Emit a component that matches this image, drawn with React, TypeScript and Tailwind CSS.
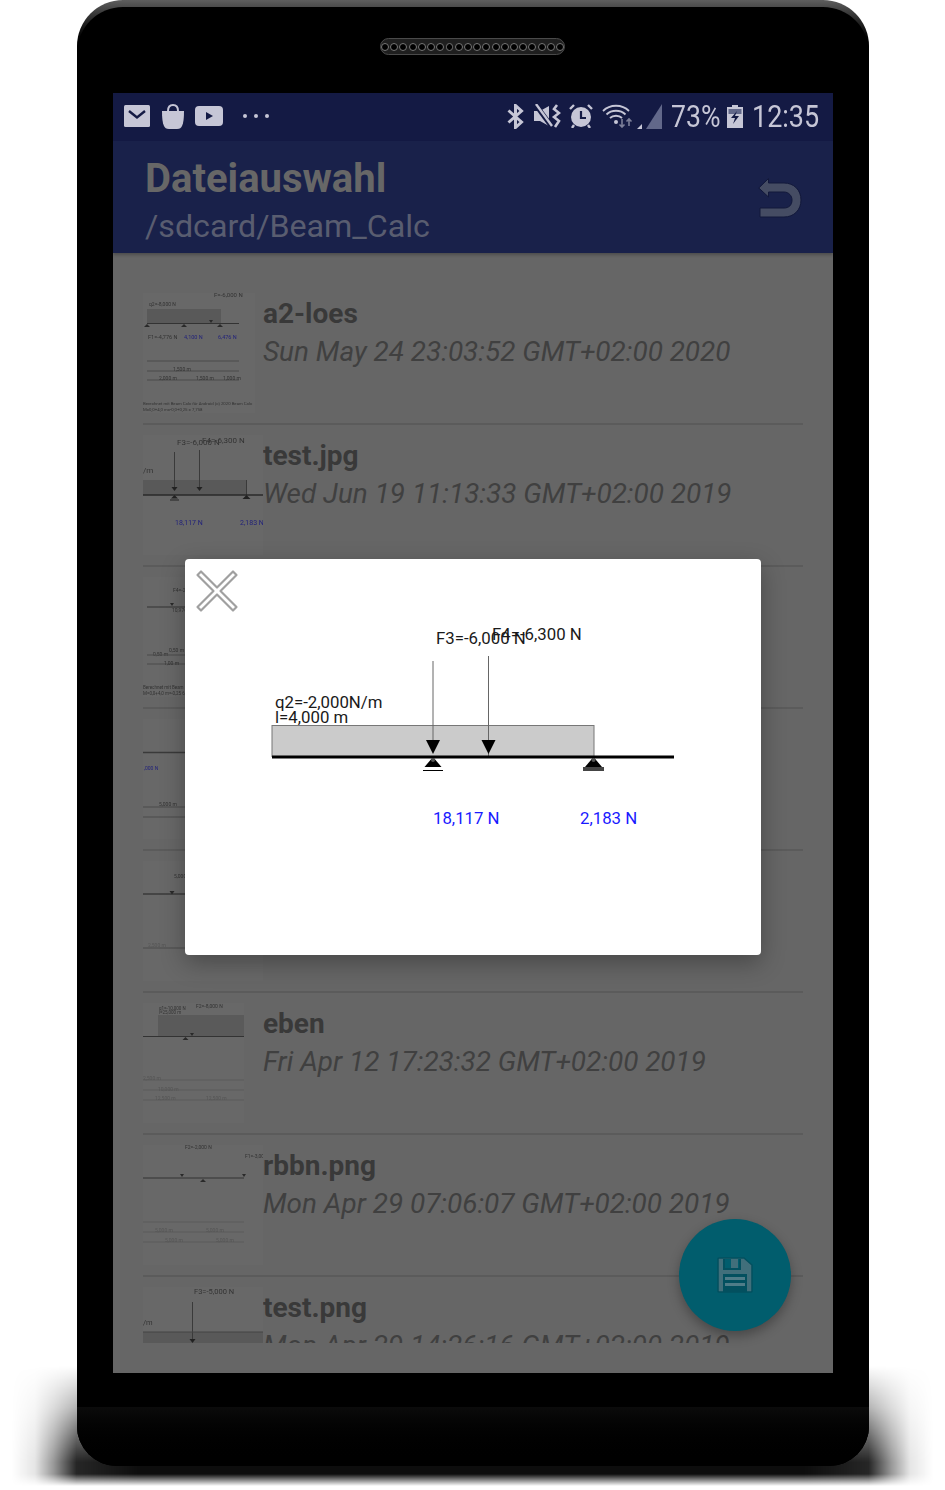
import type { ReactNode } from 'react';

const rows: { y: number; name?: string; date?: string; width?: number }[] = [
    { y: 293, name: 'a2-loes', date: 'Sun May 24 23:03:52 GMT+02:00 2020', width: 112 },
    { y: 435, name: 'test.jpg', date: 'Wed Jun 19 11:13:33 GMT+02:00 2019' },
    { y: 577 },
    { y: 719 },
    { y: 861 },
    { y: 1003, name: 'eben', date: 'Fri Apr 12 17:23:32 GMT+02:00 2019', width: 101 },
    { y: 1145, name: 'rbbn.png', date: 'Mon Apr 29 07:06:07 GMT+02:00 2019' },
    { y: 1287, name: 'test.png', date: 'Mon Apr 29 14:26:16 GMT+02:00 2019' },
];

function Line({ x1, x2, y, w = 1, c = '#4b4b4b' }: { x1: number; x2: number; y: number; w?: number; c?: string }) {
    return <line x1={x1} x2={x2} y1={y} y2={y} stroke={c} strokeWidth={w} />;
}

function Label({ x, y, s = 6, c = '#333', children }: { x: number; y: number; s?: number; c?: string; children: ReactNode }) {
    return (
        <text x={x} y={y} fontSize={s} fill={c}>
            {children}
        </text>
    );
}

function Up({ x, y, r = 3, c = '#2a2a2a' }: { x: number; y: number; r?: number; c?: string }) {
    return <path d={`M${x - r} ${y + r}L${x} ${y}L${x + r} ${y + r}Z`} fill={c} />;
}

function Down({ x, y, r = 3, c = '#2a2a2a' }: { x: number; y: number; r?: number; c?: string }) {
    return <path d={`M${x - r} ${y}L${x + r} ${y}L${x} ${y + r + 1}Z`} fill={c} />;
}

function thumbContent(y: number) {
    if (y === 293)
        return (
            <>
                <Label x={214} y={297}>F=-6,000 N</Label>
                <Label x={149} y={306} s={5}>q2=-8,000 N</Label>
                <rect x={147} y={309} width={74} height={14} fill="#595959" />
                <Line x1={147} x2={239} y={323.5} c="#333" />
                <Up x={147} y={324} />
                <Up x={184} y={324} />
                <Up x={220} y={324} />
                <Down x={211} y={320} r={2} />
                <Label x={148} y={339} s={5.5}>F1=-4,776 N</Label>
                <Label x={184} y={339} s={5.5} c="#23237a">4,100 N</Label>
                <Label x={218} y={339} s={5.5} c="#23237a">6,476 N</Label>
                <Line x1={147} x2={239} y={361} />
                <Line x1={147} x2={239} y={371} />
                <Line x1={147} x2={239} y={380} />
                <Label x={173} y={371} s={5}>1,500 m</Label>
                <Label x={159} y={380} s={5}>2,000 m</Label>
                <Label x={196} y={380} s={5}>1,500 m</Label>
                <Label x={223} y={380} s={5}>1,000 m</Label>
                <Label x={143} y={405} s={4.3}>Berechnet mit Beam Calc für Android (c) 2020 Beam Calc</Label>
                <Label x={143} y={411} s={4.3}>M=0,0+4,0 m=-0,0+0,25 = 7,758</Label>
            </>
        );
    if (y === 435)
        return (
            <>
                <Label x={177} y={445} s={8}>F3=-6,000 N</Label>
                <Label x={202} y={443} s={8}>F4=-6,300 N</Label>
                <Label x={143} y={473} s={8}>/m</Label>
                <rect x={143} y={480} width={104} height={15} fill="#595959" />
                <line x1={174.5} x2={174.5} y1={452} y2={488} stroke="#3a3a3a" />
                <line x1={199.5} x2={199.5} y1={450} y2={488} stroke="#3a3a3a" />
                <line x1={246.5} x2={246.5} y1={480} y2={495} stroke="#3a3a3a" />
                <Down x={174.5} y={487} r={3} c="#222" />
                <Down x={199.5} y={487} r={3} c="#222" />
                <Line x1={143} x2={263} y={495} w={1.5} c="#2a2a2a" />
                <Up x={174.5} y={495} r={3.5} c="#222" />
                <Line x1={170} x2={179} y={500} c="#222" />
                <Up x={246.5} y={495} r={4} c="#222" />
                <Label x={175} y={525} s={7} c="#22227a">18,117 N</Label>
                <Label x={240} y={525} s={7} c="#22227a">2,183 N</Label>
            </>
        );
    if (y === 577)
        return (
            <>
                <Label x={173} y={592} s={5}>F4=-2,000</Label>
                <Line x1={147} x2={190} y={607} c="#333" />
                <Down x={172} y={603} r={2} />
                <Line x1={171} x2={171} y={607} />
                <Label x={172} y={612} s={5}>10,976 N</Label>
                <Label x={169} y={652} s={5}>0,50 m</Label>
                <Label x={153} y={656} s={5}>0,50 m</Label>
                <Line x1={147} x2={190} y={655} />
                <Line x1={147} x2={190} y={664} />
                <Label x={164} y={665} s={5}>1,00 m</Label>
                <Label x={143} y={689} s={4.5}>Berechnet mit Beam Calc</Label>
                <Label x={143} y={695} s={4.5}>M=0,0+4,0 m=-0,25 6,58</Label>
            </>
        );
    if (y === 719)
        return (
            <>
                <Line x1={143} x2={190} y={752.5} w={1.5} c="#3a3a3a" />
                <Label x={144} y={770} s={5} c="#23237a">,000 N</Label>
                <Line x1={143} x2={190} y={807} />
                <Line x1={143} x2={190} y={817} />
                <Label x={159} y={806} s={5}>5,000 m</Label>
            </>
        );
    if (y === 861)
        return (
            <>
                <Label x={174} y={878} s={5}>5,000 N</Label>
                <Line x1={143} x2={190} y={894} w={1.5} c="#3a3a3a" />
                <Down x={172} y={891} r={2.5} />
                <Line x1={143} x2={190} y={948} />
                <Label x={148} y={947} s={5} c="#555">2,500 m</Label>
            </>
        );
    if (y === 1003)
        return (
            <>
                <Label x={196} y={1008} s={5}>F2=-8,000 N</Label>
                <Label x={159} y={1010} s={4.5}>q1=-10,000 N</Label>
                <Label x={159} y={1014} s={4.5}>l=25,000 m</Label>
                <rect x={158} y={1015} width={86} height={21} fill="#5a5a5a" />
                <Down x={192} y={1033} r={2} />
                <Line x1={143} x2={244} y={1036.5} c="#333" />
                <Up x={185.5} y={1037} r={3} />
                <Line x1={143} x2={244} y={1080} c="#5a5a5a" />
                <Line x1={143} x2={244} y={1090} c="#5a5a5a" />
                <Line x1={143} x2={244} y={1100} c="#5a5a5a" />
                <Label x={143} y={1080} s={5} c="#555">2,500 m</Label>
                <Label x={158} y={1091} s={5} c="#555">10,000 m</Label>
                <Label x={155} y={1100} s={5} c="#555">12,500 m</Label>
                <Label x={206} y={1100} s={5} c="#555">12,500 m</Label>
            </>
        );
    if (y === 1145)
        return (
            <>
                <Label x={185} y={1149} s={5}>F2=-2,000 N</Label>
                <Label x={245} y={1158} s={5}>F1=-3,000</Label>
                <Line x1={143} x2={244} y={1178} c="#333" />
                <Down x={182} y={1174} r={2} />
                <Down x={244} y={1174} r={2} />
                <Up x={203} y={1179} r={3} />
                <Line x1={143} x2={244} y={1222} c="#5a5a5a" />
                <Line x1={143} x2={244} y={1232} c="#5a5a5a" />
                <Line x1={143} x2={244} y={1242} c="#5a5a5a" />
                <Label x={155} y={1232} s={5} c="#555">5,000 m</Label>
                <Label x={206} y={1232} s={5} c="#555">5,000 m</Label>
                <Label x={165} y={1242} s={5} c="#555">5,000 m</Label>
                <Label x={216} y={1242} s={5} c="#555">5,000 m</Label>
            </>
        );
    return (
        <>
            <Label x={194} y={1294} s={7.5}>F3=-5,000 N</Label>
            <Label x={143} y={1325} s={7.5}>/m</Label>
            <rect x={143} y={1332} width={120} height={12} fill="#595959" />
            <line x1={192.5} x2={192.5} y1={1302} y2={1340} stroke="#3a3a3a" />
            <line x1={143} x2={263} y1={1332} y2={1332} stroke="#454545" />
            <Down x={192.5} y={1339} r={3} c="#222" />
        </>
    );
}

function Thumb({ y, width = 120 }: { y: number; width?: number }) {
    return (
        <svg viewBox={`143 ${y} 120 120`} className="w-[120px] h-[120px] shrink-0 blur-[0.5px]">
            <rect x={143} y={y} width={width} height={120} fill="#686868" />
            {thumbContent(y)}
        </svg>
    );
}

function Diagram() {
    return (
        <svg viewBox="185 559 576 396" className="w-full h-full">
            <path
                d="M201 571.500L217 587.500L233 571.500L236.500 575L220.500 591L236.500 607L233 610.500L217 594.500L201 610.500L197.500 607L213.500 591L197.500 575Z"
                fill="#fff"
                stroke="#a0a0a0"
                strokeWidth="2.200"
                strokeLinejoin="round"
            />
            <rect x={272} y={725.5} width={322} height={31} fill="#cbcbcb" stroke="#777" />
            <line x1={433} x2={433} y1={661} y2={741} stroke="#666" />
            <line x1={488.5} x2={488.5} y1={656} y2={757} stroke="#666" />
            <path d="M426 740H440L433 754Z" fill="#000" />
            <path d="M481.500 740H495.500L488.500 754Z" fill="#000" />
            <line x1={272} x2={674} y1={757} y2={757} stroke="#000" strokeWidth="3" />
            <path d="M433 757L441.500 767H424.500Z" fill="#000" />
            <circle cx={433} cy={760} r={2} fill="#555" />
            <line x1={423} x2={443} y1={770.5} y2={770.5} stroke="#000" />
            <path d="M593.500 757L602 767H585Z" fill="#000" />
            <circle cx={593.5} cy={760} r={2} fill="#555" />
            <rect x={583} y={767} width={21} height={4} fill="#444" />
            <text x={436} y={644} fontSize="16.800" fill="#1a1a1a">F3=-6,000 N</text>
            <text x={492} y={640} fontSize="16.800" fill="#1a1a1a">F4=-6,300 N</text>
            <text x={275} y={708} fontSize="16.800" fill="#1a1a1a">q2=-2,000N/m</text>
            <text x={275} y={723} fontSize="16.800" fill="#1a1a1a">l=4,000 m</text>
            <text x={433} y={824} fontSize="16.800" fill="#1a1aff">18,117 N</text>
            <text x={580} y={824} fontSize="16.800" fill="#1a1aff">2,183 N</text>
        </svg>
    );
}

function StatusLeft() {
    return (
        <div className="flex items-center text-[#c6c6d6]">
            <svg viewBox="0 0 26 22" className="w-[26px] h-[22px]">
                <rect width="26" height="22" rx="1.500" fill="currentColor" />
                <path d="M5 6L13 12.500L21 6" fill="none" stroke="#141a44" strokeWidth="2.400" />
            </svg>
            <svg viewBox="0 0 22 25" className="w-[22px] h-[25px] ml-[12px]">
                <path d="M0 7H22C22 14 21.500 19 20 22C19 24 18 25 15 25H7C4 25 3 24 2 22C.5 19 0 14 0 7Z" fill="currentColor" />
                <path d="M6 7C6 3 8 1 11 1C14 1 16 3 16 7" fill="none" stroke="currentColor" strokeWidth="2" />
            </svg>
            <svg viewBox="0 0 28 20" className="w-[28px] h-[20px] ml-[11px]">
                <rect width="28" height="20" rx="4" fill="currentColor" />
                <path d="M11 6L18 10L11 14Z" fill="#141a44" />
            </svg>
            <div className="flex gap-[7px] ml-[20px]">
                <div className="w-[4px] h-[4px] rounded-full bg-[#c6c6d6]" />
                <div className="w-[4px] h-[4px] rounded-full bg-[#c6c6d6]" />
                <div className="w-[4px] h-[4px] rounded-full bg-[#c6c6d6]" />
            </div>
        </div>
    );
}

function StatusRight() {
    return (
        <div className="flex items-center text-[#c6c6d6]">
            <svg viewBox="0 0 17 25" className="w-[17px] h-[25px]">
                <path d="M1.500 6.500L14.500 18L8.500 23.500V1.500L14.500 7L1.500 18.500" fill="none" stroke="currentColor" strokeWidth="3" />
            </svg>
            <svg viewBox="0 0 27 24" className="w-[27px] h-[24px] ml-[10px]">
                <path d="M0 7H6L15 2V22L6 17H0Z" fill="currentColor" />
                <path d="M1 0L18 23" stroke="#141a44" strokeWidth="5" />
                <path d="M2 0L18 22" stroke="currentColor" strokeWidth="2.400" />
                <path d="M23 1L20 5L25 9L20 13L25 17L21 23" fill="none" stroke="currentColor" strokeWidth="2.600" />
            </svg>
            <svg viewBox="0 0 24 24" className="w-[24px] h-[24px] ml-[8px]">
                <circle cx="12" cy="13" r="10" fill="currentColor" />
                <path d="M12 7V14H17" fill="none" stroke="#141a44" strokeWidth="2.200" />
                <path d="M1 5L5 1M23 5L19 1M5 21L3 24M19 21L21 24" stroke="currentColor" strokeWidth="2.400" />
            </svg>
            <svg viewBox="0 0 31 24" className="w-[31px] h-[24px] ml-[9px]">
                <path d="M1 7C8 0 20 0 27 7M4.500 10.500C9.500 5.500 18.500 5.500 23.500 10.500M8 14C11 11 17 11 20 14" fill="none" stroke="currentColor" strokeWidth="1.800" />
                <circle cx="14" cy="18" r="2" fill="currentColor" />
                <path d="M20 15V23M17.500 20.500L20 23L22.500 20.500" fill="none" stroke="#7c7f99" strokeWidth="1.600" />
                <path d="M27 22V15M24.500 17.500L27 15L29.500 17.500" fill="none" stroke="#7c7f99" strokeWidth="1.600" />
            </svg>
            <svg viewBox="0 0 25 25" className="w-[25px] h-[25px] ml-[4px]">
                <path d="M25 0V25H9Z" fill="#62688a" />
                <path d="M0 25L5 20V25Z" fill="currentColor" />
            </svg>
            <span className="w-[48px] ml-[9px] text-[31px] leading-none origin-left scale-x-[0.86] whitespace-nowrap">73%</span>
            <svg viewBox="0 0 16 23" className="w-[16px] h-[23px] ml-[8px]">
                <path d="M5 0H11V2H16V23H0V2H5Z" fill="currentColor" />
                <rect x="1.500" y="4" width="13" height="5" fill="#62688a" />
                <path d="M10 6L4 13H8L6 19L12 11H8Z" fill="#141a44" />
            </svg>
            <span className="w-[66px] ml-[9px] text-[31px] leading-none origin-left scale-x-[0.87] whitespace-nowrap">12:35</span>
        </div>
    );
}

export default function App() {
    return (
        <div className="relative w-[945px] h-[1490px] bg-white overflow-hidden pl-[77px] font-[Roboto,sans-serif]">
            {/* floor shadow */}
            <div className="absolute left-[12px] top-[1366px] w-[921px] h-[120px] bg-[linear-gradient(to_right,transparent,rgba(0,0,0,0.1)_2.5%,rgba(0,0,0,0.4)_4.5%,rgba(0,0,0,0.85)_7%,rgba(0,0,0,0.95)_14%,rgba(0,0,0,0.95)_86%,rgba(0,0,0,0.85)_93%,rgba(0,0,0,0.4)_95.5%,rgba(0,0,0,0.1)_97.5%,transparent)] [mask-image:linear-gradient(to_bottom,transparent,rgba(0,0,0,0.35)_35%,black_80%,black_90%,transparent)]" />

            <div className="relative w-[792px] h-[1466px] pt-[7px] rounded-t-[46px] rounded-b-[40px] bg-gradient-to-b from-[#5e5e5e] to-black to-[48px]">
                <div className="h-full flex flex-col items-center bg-black rounded-t-[46px] rounded-b-[40px]">
                    {/* speaker */}
                    <div className="mt-[31px] -ml-[1px] w-[185px] h-[17px] shrink-0 flex items-center justify-center gap-[1.3px] rounded-full bg-[#1f1f1f] border border-[#4a4a4a]">
                        {Array.from({ length: 20 }).map((_, i) => (
                            <div key={i} className="w-[8px] h-[8px] rounded-full bg-black border border-[#777777]" />
                        ))}
                    </div>

                    {/* screen */}
                    <div className="relative mt-[38px] w-[720px] h-[1280px] shrink-0 flex flex-col bg-[#666666] overflow-hidden">
                        <div className="h-[48px] shrink-0 flex items-center justify-between pl-[11px] pr-[15px] pb-[2px] bg-[#141a44]">
                            <StatusLeft />
                            <StatusRight />
                        </div>
                        <div className="h-[112px] shrink-0 flex items-start justify-between pl-[32px] pr-[32px] bg-[#19214a] shadow-[0_2px_3px_rgba(0,0,0,0.25)]">
                            <div className="flex flex-col mt-[14px]">
                                <div className="text-[40px] leading-[48px] font-bold text-[#676767]">Dateiauswahl</div>
                                <div className="text-[32.2px] leading-[47px] text-[#595d70]">/sdcard/Beam_Calc</div>
                            </div>
                            <svg viewBox="0 0 44 41" className="w-[44px] h-[41px] mt-[37px] -mr-[1px]">
                                <path
                                    d="M10.500 .5L.8 10L10.500 19V14H26C31 14 34 18 34 22C34 27 31 30 26 30H2V39H26C36 39 43 32 43 22C43 12 36 5 26 5H10.500Z"
                                    fill="#454c63"
                                    stroke="#12183a"
                                    strokeWidth="1"
                                    strokeLinejoin="round"
                                />
                            </svg>
                        </div>

                        {/* file list */}
                        <div className="mx-[30px] mt-[30px] h-[1060px] overflow-hidden">
                            {rows.map((row) => (
                                <div key={row.y} className="flex h-[142px] shrink-0 pt-[10px] border-b-2 border-[#5b5b5b]">
                                    <Thumb y={row.y} width={row.width} />
                                    {row.name && (
                                        <div className="pt-[2px] text-[27.9px] leading-[38px] text-[#404040] whitespace-nowrap">
                                            <div className="font-bold text-[#393939] text-[28px]">{row.name}</div>
                                            <div className="italic">{row.date}</div>
                                        </div>
                                    )}
                                </div>
                            ))}
                        </div>

                        {/* preview dialog */}
                        <div className="absolute left-[72px] top-[466px] w-[576px] h-[396px] rounded-[4px] bg-white shadow-[0_8px_24px_rgba(0,0,0,0.3)] overflow-hidden">
                            <Diagram />
                        </div>

                        {/* fab */}
                        <div className="absolute left-[566px] top-[1126px] w-[112px] h-[112px] flex items-center justify-center rounded-full bg-[#015d6d] shadow-[0_5px_12px_rgba(0,0,0,0.3)]">
                            <svg viewBox="0 0 36 36" className="w-[36px] h-[36px]">
                                <path d="M1 2C1 1.500 1.500 1 2 1H27L35 8V34C35 34.500 34.500 35 34 35H2C1.500 35 1 34.500 1 34Z" fill="#416f7b" stroke="#03505f" strokeWidth="1.500" />
                                <rect x="6" y="2" width="18" height="11" fill="#03505f" />
                                <rect x="8" y="2" width="14" height="9" fill="#015d6d" />
                                <rect x="14" y="2" width="7" height="9" fill="#416f7b" />
                                <rect x="6" y="17" width="24" height="18" fill="#03505f" />
                                <rect x="8" y="20" width="20" height="3" fill="#4f7c88" />
                                <rect x="8" y="26" width="20" height="3" fill="#4f7c88" />
                            </svg>
                        </div>
                    </div>

                    {/* chin */}
                    <div className="mt-[34px] w-full flex-1 rounded-b-[40px] bg-gradient-to-b from-[#0b0b0b] to-black" />
                </div>
            </div>
        </div>
    );
}
